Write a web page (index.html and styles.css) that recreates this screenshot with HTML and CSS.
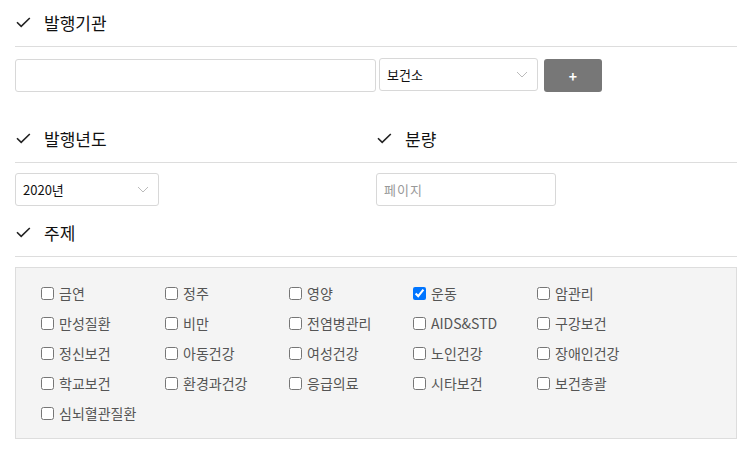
FILE: index.html
```html
<!DOCTYPE html>
<html lang="ko">
<head>
<meta charset="utf-8">
<link rel="stylesheet" href="styles.css">
</head>
<body>
<div class="page">
  <section class="sec">
    <h3 class="head"><svg class="chk" width="15" height="11" viewBox="0 0 15 11"><path d="M1 5.2 L5.2 9.4 L13.8 1" fill="none" stroke="#222" stroke-width="1.6"/></svg>발행기관</h3>
    <div class="row1">
      <input class="inp inp-wide" type="text">
      <div class="sel sel-org">
        <select><option>보건소</option></select>
        <svg class="arrow" width="12" height="7" viewBox="0 0 12 7"><path d="M1 1 L6 6 L11 1" fill="none" stroke="#bbb" stroke-width="1"/></svg>
      </div>
      <button class="add">+</button>
    </div>
  </section>

  <section class="two">
    <div class="col">
      <h3 class="head"><svg class="chk" width="15" height="11" viewBox="0 0 15 11"><path d="M1 5.2 L5.2 9.4 L13.8 1" fill="none" stroke="#222" stroke-width="1.6"/></svg>발행년도</h3>
      <div class="sel sel-year">
        <select><option>2020년</option></select>
        <svg class="arrow" width="12" height="7" viewBox="0 0 12 7"><path d="M1 1 L6 6 L11 1" fill="none" stroke="#bbb" stroke-width="1"/></svg>
      </div>
    </div>
    <div class="col">
      <h3 class="head"><svg class="chk" width="15" height="11" viewBox="0 0 15 11"><path d="M1 5.2 L5.2 9.4 L13.8 1" fill="none" stroke="#222" stroke-width="1.6"/></svg>분량</h3>
      <input class="inp inp-page" type="text" placeholder="페이지">
    </div>
  </section>

  <section class="sec">
    <h3 class="head"><svg class="chk" width="15" height="11" viewBox="0 0 15 11"><path d="M1 5.2 L5.2 9.4 L13.8 1" fill="none" stroke="#222" stroke-width="1.6"/></svg>주제</h3>
    <div class="topics">
      <label class="item"><input type="checkbox">금연</label>
      <label class="item"><input type="checkbox">정주</label>
      <label class="item"><input type="checkbox">영양</label>
      <label class="item"><input type="checkbox" checked>운동</label>
      <label class="item"><input type="checkbox">암관리</label>
      <label class="item"><input type="checkbox">만성질환</label>
      <label class="item"><input type="checkbox">비만</label>
      <label class="item"><input type="checkbox">전염병관리</label>
      <label class="item"><input type="checkbox">AIDS&amp;STD</label>
      <label class="item"><input type="checkbox">구강보건</label>
      <label class="item"><input type="checkbox">정신보건</label>
      <label class="item"><input type="checkbox">아동건강</label>
      <label class="item"><input type="checkbox">여성건강</label>
      <label class="item"><input type="checkbox">노인건강</label>
      <label class="item"><input type="checkbox">장애인건강</label>
      <label class="item"><input type="checkbox">학교보건</label>
      <label class="item"><input type="checkbox">환경과건강</label>
      <label class="item"><input type="checkbox">응급의료</label>
      <label class="item"><input type="checkbox">시타보건</label>
      <label class="item"><input type="checkbox">보건총괄</label>
      <label class="item"><input type="checkbox">심뇌혈관질환</label>
    </div>
  </section>
</div>
</body>
</html>
```
FILE: styles.css
```css
* { box-sizing: border-box; }
html, body { margin: 0; padding: 0; background: #fff; }
body {
  font-family: "Noto Sans CJK KR", "Noto Sans", sans-serif;
  color: #222;
}
.page {
  width: 753px;
  padding: 0 16px 0 15px;
}
.head {
  margin: 0;
  height: 47px;
  display: flex;
  align-items: center;
  font-size: 17px;
  font-weight: 400;
  color: #111;
  border-bottom: 1px solid #ddd;
  padding-bottom: 1px;
}
.chk { margin: 0 13px 0 1px; }
.row1 {
  display: flex;
  align-items: flex-start;
  margin-top: 12px;
}
.inp {
  height: 33px;
  border: 1px solid #d8d8d8;
  border-radius: 3px;
  background: #fff;
  font-family: inherit;
  font-size: 13px;
  padding: 0 7px;
  outline: none;
}
.inp::placeholder { color: #999; letter-spacing: 1px; }
.inp-wide { width: 361px; }
.sel { position: relative; height: 33px; }
.sel select {
  appearance: none;
  -webkit-appearance: none;
  width: 100%;
  height: 100%;
  border: 1px solid #d8d8d8;
  border-radius: 3px;
  background: #fff;
  font-family: inherit;
  font-size: 13px;
  color: #111;
  padding: 0 7px;
  outline: none;
}
.arrow { position: absolute; right: 10px; top: 13px; pointer-events: none; }
.sel-org { width: 159px; margin-left: 3px; margin-top: -1px; }
.add {
  width: 58px;
  height: 33px;
  margin-left: 6px;
  border: 0;
  border-radius: 3px;
  background: #777;
  color: #fff;
  font-family: inherit;
  font-size: 14px;
  font-weight: 700;
}
.two {
  display: grid;
  grid-template-columns: 361px 1fr;
  margin-top: 24px;
}
.sel-year { width: 144px; margin-top: 10px; }
.inp-page { width: 180px; margin-top: 10px; }
.two + .sec { margin-top: 4px; }
.topics {
  margin-top: 10px;
  background: #f4f4f4;
  border: 1px solid #ddd;
  padding: 10px 20px 10px 25px;
  display: grid;
  grid-template-columns: repeat(5, 124px);
  grid-auto-rows: 30px;
}
.item {
  display: flex;
  align-items: center;
  font-size: 14px;
  color: #555;
}
.item input {
  width: 13px;
  height: 13px;
  margin: 0 5px 0 0;
}
```
